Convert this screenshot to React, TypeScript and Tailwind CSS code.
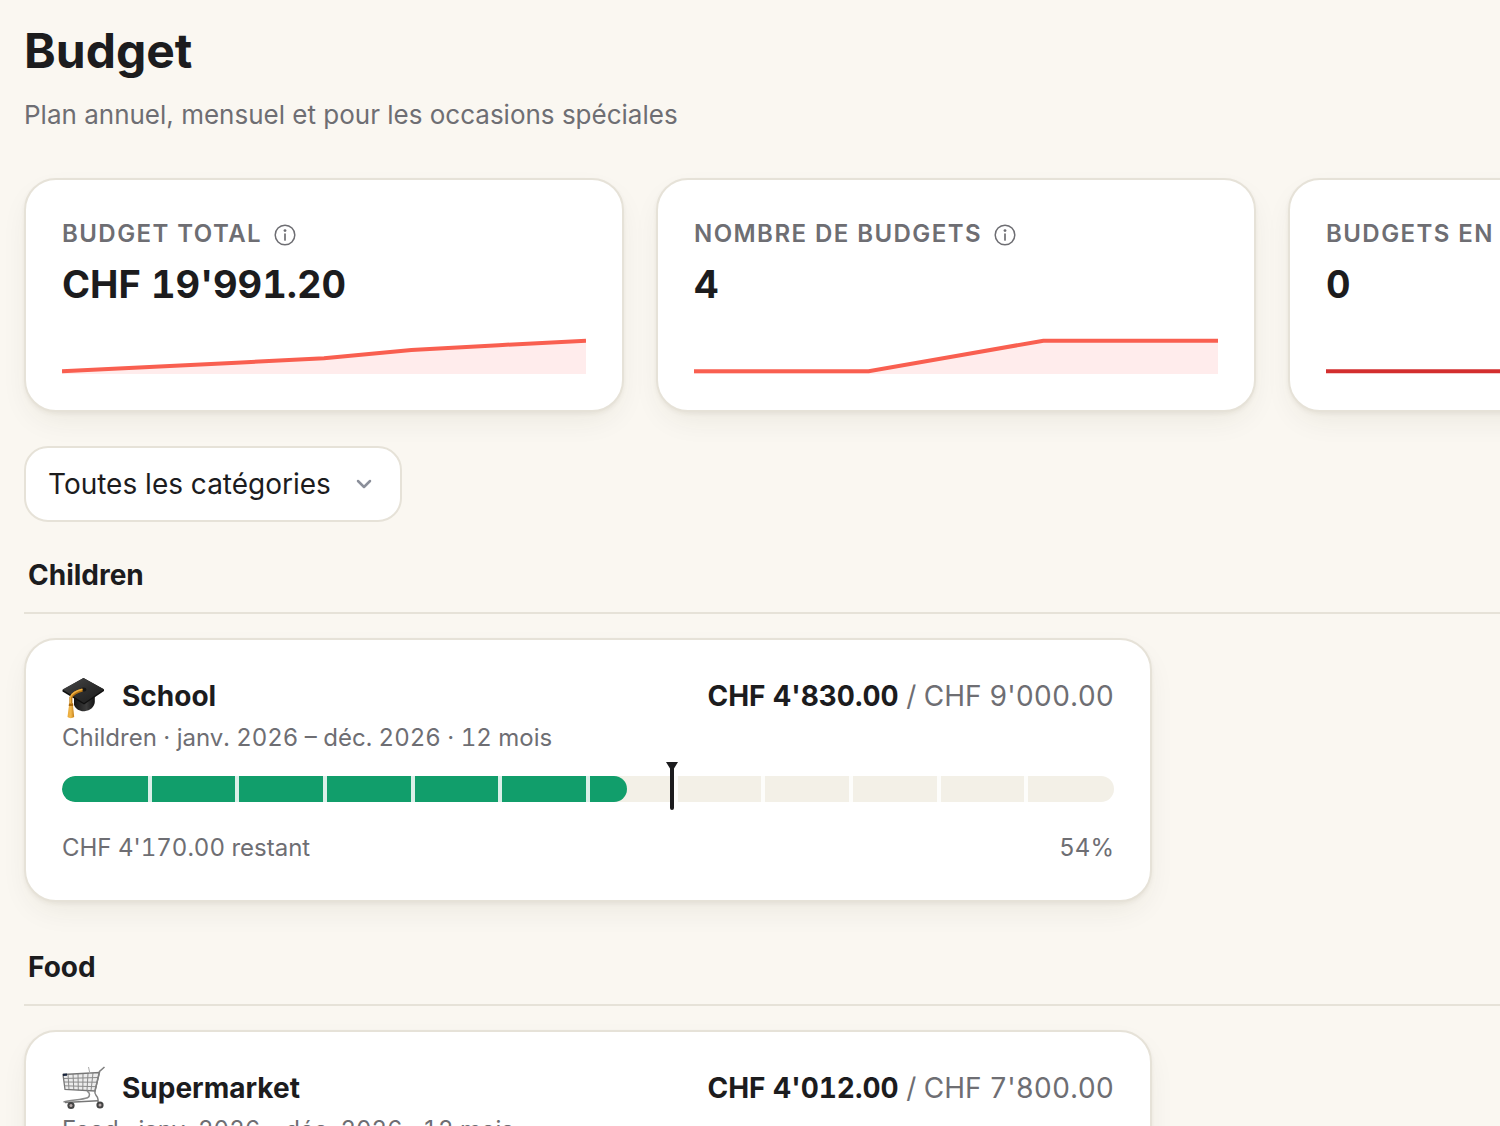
import React, { useState } from "react";
import { ChevronDown } from "lucide-react";

const CARD =
  "rounded-[32px] border-2 border-[#e6e2d8] bg-white shadow-[0_2px_4px_rgba(60,50,20,0.06),0_12px_32px_-8px_rgba(60,50,20,0.09)]";

function InfoIcon() {
  return (
    <svg viewBox="0 0 22 22" className="size-[22px]" fill="none" aria-hidden="true">
      <circle cx="11" cy="11" r="9.8" stroke="currentColor" strokeWidth="1.5" />
      <circle cx="11" cy="6.6" r="1.4" fill="currentColor" />
      <path d="M11 10v6" stroke="currentColor" strokeWidth="1.7" strokeLinecap="round" />
    </svg>
  );
}

function GraduationCap() {
  return (
    <svg viewBox="0 0 44 44" className="size-[44px] shrink-0" aria-hidden="true">
      <defs>
        <linearGradient id="cap-board" x1="0" y1="0" x2="1" y2="1">
          <stop offset="0" stopColor="#4a4a4a" />
          <stop offset="0.5" stopColor="#2e2e2e" />
          <stop offset="1" stopColor="#1c1c1c" />
        </linearGradient>
        <linearGradient id="cap-base" x1="0" y1="0" x2="1" y2="0">
          <stop offset="0" stopColor="#151515" />
          <stop offset="0.6" stopColor="#3c3c3c" />
          <stop offset="1" stopColor="#111111" />
        </linearGradient>
        <linearGradient id="cap-tassel" x1="0" y1="0" x2="1" y2="0">
          <stop offset="0" stopColor="#e9a93a" />
          <stop offset="0.5" stopColor="#f2b94d" />
          <stop offset="1" stopColor="#c27d16" />
        </linearGradient>
      </defs>
      <path d="M12 22v7c2 4.500 6 6.500 10.500 6.200 6-.4 10-4.700 10.300-9.200V17z" fill="url(#cap-base)" />
      <path d="M0.500 14 21.500 2 42 13.500v1.500L22 28.500 0.500 15.500z" fill="#101010" />
      <path d="M0.500 13.500 21.500 2 42 13.300 22 27z" fill="url(#cap-board)" />
      <ellipse cx="21.500" cy="13.500" rx="2.800" ry="2" fill="#161616" />
      <path d="M20.500 14c-6 1.500-10 4-11.600 7.500v6" fill="none" stroke="#b87512" strokeWidth="3" />
      <path d="M20.500 13.300c-6 1.500-10.500 4-12 7.700v6" fill="none" stroke="#efb042" strokeWidth="1.500" />
      <path d="M7.300 27h3.400l1.500 14c-2 1.500-5 1.500-6.700 0z" fill="url(#cap-tassel)" />
      <path d="M7 27.500h4.200v2.500H6.700z" fill="#a9670c" />
    </svg>
  );
}

function ShoppingCart() {
  return (
    <svg viewBox="0 2 44 44" className="size-[44px] shrink-0 overflow-visible" fill="none" aria-hidden="true">
      <path d="M1 8.500 37.500 6.500 33 25 3 23.500z" fill="#ececec" />
      <path
        d="M6 8.200 7 23.700M11 8l.8 15.900M16 7.700l.3 16.500M21 7.400l-.2 17M26 7.200l-1 17.300M31 6.900l-2 17.900M1.500 12.500l35-1M2 16l33.500.2M2.500 19.800l32 .9"
        stroke="#8b8b8b"
        strokeWidth="1"
      />
      <path d="M1 8.500 37.500 6.500 33 25 3 23.500z" stroke="#777777" strokeWidth="1.300" />
      <path d="M28 8 26.500 1" stroke="#aaaaaa" strokeWidth="1" />
      <path d="M42.500 1 37.500 5.500 33 25c-1 3.500 1.500 4 2.500 6.500.8 2 .8 3.500.5 5" stroke="#808080" strokeWidth="1.500" />
      <path d="M25 25c3 1.500 3.500 5 .5 6.800C20 34 8 34 1.500 36" stroke="#8b8b8b" strokeWidth="1.500" />
      <path d="M3 36.500 36 34.800" stroke="#777777" strokeWidth="1.500" />
      <path d="M1 7.800 5 7.500v2.300L1 10z" fill="#18243c" />
      <circle cx="9" cy="39.500" r="3.600" fill="#444444" />
      <circle cx="9" cy="39.500" r="1.500" fill="#b5a9a9" />
      <circle cx="38" cy="39" r="3.600" fill="#444444" />
      <circle cx="38" cy="39" r="1.500" fill="#b5a9a9" />
    </svg>
  );
}

type Stat = { label: string; value: string; color: string; fill: string; points: number[] };

const STATS: Stat[] = [
  {
    label: "Budget total",
    value: "CHF 19'991.20",
    color: "#f95f50",
    fill: "#ffecec",
    points: [33.3, 29, 24.700, 20.300, 12, 7.200, 2.700],
  },
  {
    label: "Nombre de budgets",
    value: "4",
    color: "#f95f50",
    fill: "#ffecec",
    points: [33.3, 33.3, 33.3, 18, 2.700, 2.700, 2.700],
  },
  {
    label: "Budgets en dépassement",
    value: "0",
    color: "#d32f2f",
    fill: "none",
    points: [33.3, 33.3, 33.3, 33.3, 33.3, 33.3, 33.3],
  },
];

function Sparkline({ points, color, fill }: { points: number[]; color: string; fill: string }) {
  const line = points.map((y, i) => `${(i * 524) / (points.length - 1)},${y}`).join(" ");
  return (
    <svg viewBox="0 0 524 36" preserveAspectRatio="none" className="block h-9 w-full" aria-hidden="true">
      <polygon points={`${line} 524,36 0,36`} fill={fill} />
      <polyline points={line} fill="none" stroke={color} strokeWidth="4" />
    </svg>
  );
}

function StatCard({ stat }: { stat: Stat }) {
  return (
    <article className={`${CARD} flex flex-col px-9 py-9`}>
      <div className="flex items-center gap-3 text-[#6e6e73]">
        <h2 className="text-[24px] leading-9 font-semibold tracking-[0.06em] whitespace-nowrap uppercase">
          {stat.label}
        </h2>
        <button type="button" aria-label={`Informations : ${stat.label}`} className="pt-[2px]">
          <InfoIcon />
        </button>
      </div>
      <p className="mt-2 mb-[30px] text-[38px] leading-[48px] font-bold tabular-nums">{stat.value}</p>
      <Sparkline points={stat.points} color={stat.color} fill={stat.fill} />
    </article>
  );
}

type Budget = {
  group: string;
  name: string;
  icon: React.ReactNode;
  spentLabel: string;
  totalLabel: string;
  remaining: string;
  spent: number;
  total: number;
};

const BUDGETS: Budget[] = [
  {
    group: "Children",
    name: "School",
    icon: <GraduationCap />,
    spentLabel: "CHF 4'830.00",
    totalLabel: "CHF 9'000.00",
    remaining: "CHF 4'170.00 restant",
    spent: 4830,
    total: 9000,
  },
  {
    group: "Food",
    name: "Supermarket",
    icon: <ShoppingCart />,
    spentLabel: "CHF 4'012.00",
    totalLabel: "CHF 7'800.00",
    remaining: "CHF 3'788.00 restant",
    spent: 4012,
    total: 7800,
  },
];

const MONTH_DIVIDERS = [1, 2, 3, 4, 5, 6, 7, 8, 9, 10, 11];

function ProgressBar({ label, ratio, today }: { label: string; ratio: number; today: number }) {
  return (
    <div
      className="relative h-[26px]"
      role="progressbar"
      aria-label={label}
      aria-valuemin={0}
      aria-valuemax={100}
      aria-valuenow={Math.round(ratio * 100)}
    >
      <div className="relative h-full overflow-hidden rounded-full bg-[#f3f0e7]">
        <div className="h-full rounded-full bg-[#119e6b]" style={{ width: `${ratio * 100}%` }} />
        {MONTH_DIVIDERS.map((m) => (
          <span
            key={m}
            className="absolute inset-y-0 w-1 -translate-x-1/2 bg-white/85"
            style={{ left: `${(m / 12) * 100}%` }}
          />
        ))}
      </div>
      <svg
        viewBox="0 0 12 48"
        className="absolute -top-[14px] h-12 w-3 -translate-x-1/2"
        style={{ left: `${today * 100}%` }}
        aria-hidden="true"
      >
        <path d="M0 0h12L8 6.500V46a2 2 0 0 1-4 0V6.500z" fill="#1c1c1e" />
      </svg>
    </div>
  );
}

function BudgetSection({ budget }: { budget: Budget }) {
  const ratio = budget.spent / budget.total;
  return (
    <section>
      <h2 className="border-b-2 border-[#e6e2d8] px-1 pb-[17px] text-[28px] leading-10 font-bold">{budget.group}</h2>
      <article className={`${CARD} mt-6 max-w-[1128px] px-9 pt-9 pb-[34px]`}>
        <div className="flex items-start justify-between text-[28px] leading-10">
          <div className="flex items-start gap-4">
            {budget.icon}
            <h3 className="font-bold">{budget.name}</h3>
          </div>
          <p className="text-[#6e6e73] tabular-nums">
            <strong className="font-bold text-[#1c1c1e]">{budget.spentLabel}</strong> / {budget.totalLabel}
          </p>
        </div>
        <p className="mb-5 text-[24px] leading-9 text-[#6e6e73] tabular-nums">
          {budget.group} · janv. 2026 – déc. 2026 · 12 mois
        </p>
        <ProgressBar label={budget.name} ratio={ratio} today={0.58} />
        <div className="mt-7 flex justify-between text-[24px] leading-9 text-[#6e6e73] tabular-nums">
          <span>{budget.remaining}</span>
          <span>{Math.round(ratio * 100)}%</span>
        </div>
      </article>
    </section>
  );
}

export default function App() {
  const [category, setCategory] = useState("all");
  const shown = BUDGETS.filter((b) => category === "all" || b.group === category);
  return (
    <main className="h-screen overflow-hidden bg-[#faf7f1] pt-6 pl-6 font-['Inter','Liberation_Sans',sans-serif] text-[#1c1c1e]">
      <header>
        <h1 className="text-[48px] leading-[54px] font-bold">Budget</h1>
        <p className="mt-5 text-[26px] leading-[34px] text-[#6e6e73]">
          Plan annuel, mensuel et pour les occasions spéciales
        </p>
      </header>

      <div className="mt-[46px] grid grid-flow-col auto-cols-[600px] gap-8">
        {STATS.map((s) => (
          <StatCard key={s.label} stat={s} />
        ))}
      </div>

      <div className="relative mt-[34px] mb-[33px] w-fit">
        <select
          aria-label="Catégorie"
          value={category}
          onChange={(e) => setCategory(e.target.value)}
          className="block h-[76px] appearance-none rounded-[24px] border-2 border-[#e6e2d8] bg-white pr-[69px] pl-[22px] text-[28px] leading-10"
        >
          <option value="all">Toutes les catégories</option>
          <option value="Children">Children</option>
          <option value="Food">Food</option>
        </select>
        <ChevronDown
          className="pointer-events-none absolute top-[26px] right-[26px] size-6 text-[#8b8f9a]"
          strokeWidth={2.5}
        />
      </div>

      <div className="flex flex-col gap-[45px]">
        {shown.map((b) => (
          <BudgetSection key={b.name} budget={b} />
        ))}
      </div>
    </main>
  );
}
